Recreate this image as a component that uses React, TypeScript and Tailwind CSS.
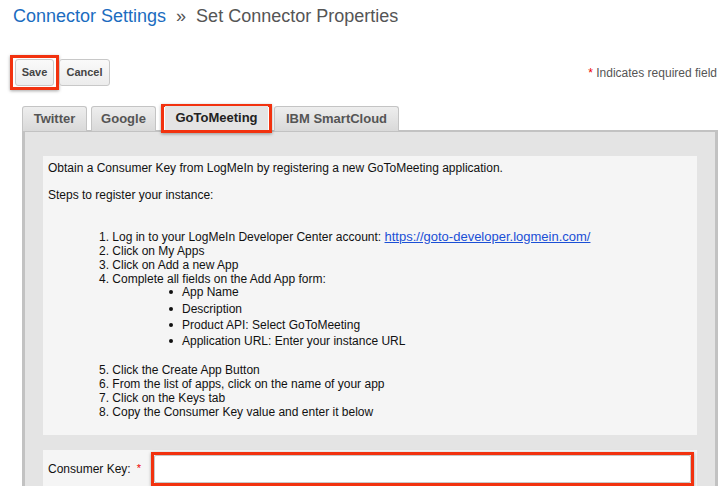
import React from "react";

const tabBase =
  "h-[25px] flex items-center justify-center border border-[#c4c4c4] border-b-0 rounded-t-[3px] bg-gradient-to-b from-[#eeeeee] to-[#d9d9d9] text-[13px] font-bold text-[#555]";

export default function App() {
  return (
    <div className="w-[721px] h-[486px] overflow-hidden bg-white font-['Liberation_Sans',Arial,sans-serif] text-[#222]">
      <h1 className="pl-[13px] pt-[5px] h-[27px] text-[18px] leading-[22px] font-normal">
        <span className="text-[#1b6cbf]">Connector Settings</span>
        <span className="text-[#555]">&nbsp;&nbsp;»&nbsp;&nbsp;Set Connector Properties</span>
      </h1>

      <div className="mt-[28px] flex items-center justify-between pl-[10px] pr-[4px]">
        <div className="flex items-center">
          <div className="w-[49px] h-[35px] border-[3px] border-[#f2320f] shadow-[0_1px_3px_rgba(0,0,0,0.35)] flex items-center pl-[2px]">
            <button className="w-[39px] h-[27px] border border-[#c8c8c8] rounded-[3px] bg-gradient-to-b from-[#fafafa] to-[#ececec] text-[11px] font-bold text-[#444]">
              Save
            </button>
          </div>
          <button className="w-[51px] h-[27px] border border-[#c8c8c8] rounded-[3px] bg-gradient-to-b from-[#fafafa] to-[#ececec] text-[11px] font-bold text-[#444]">
            Cancel
          </button>
        </div>
        <div className="text-[12px] text-[#555]">
          <span className="text-[#e00]">*</span> Indicates required field
        </div>
      </div>

      <div className="mt-[15px] pl-[22px] flex items-end h-[26px] relative z-10">
        <div className={tabBase + " w-[65px]"}>Twitter</div>
        <div className={tabBase + " w-[65px] ml-[4px]"}>Google</div>
        <div className="ml-[5px] w-[111px] h-[29px] border-[3px] border-[#f2320f] shadow-[0_1px_3px_rgba(0,0,0,0.35)] flex items-end pl-[1px] mb-[-2px]">
          <div className="w-[103px] h-[24px] flex items-center justify-center bg-[#e4e4e4] text-[13px] font-bold text-[#222]">
            GoToMeeting
          </div>
        </div>
        <div className={tabBase + " w-[125px] ml-[2px]"}>IBM SmartCloud</div>
      </div>

      <div className="ml-[22px] mr-[3px] mt-[-1px] border-t-2 border-l-[3px] border-r-[3px] border-[#c2c2c2] bg-[#e4e4e4] h-[400px] px-[18px] pt-[24px]">
        <div className="bg-[#f5f5f5] pl-[5px] pt-[5px] pb-[16px] text-[12px] leading-[14px] text-[#111]">
          <p>Obtain a Consumer Key from LogMeIn by registering a new GoToMeeting application.</p>
          <p className="mt-[13px]">Steps to register your instance:</p>
          <div className="mt-[28px] pl-[51px]">
            <div>
              1. Log in to your LogMeIn Developer Center account:{" "}
              <a className="text-[#1a4fd6] underline text-[13px]">https://goto-developer.logmein.com/</a>
            </div>
            <div>2. Click on My Apps</div>
            <div>3. Click on Add a new App</div>
            <div>4. Complete all fields on the Add App form:</div>
            <ul className="pl-[70px] mb-[13px] -mt-[2px]">
              {[
                "App Name",
                "Description",
                "Product API: Select GoToMeeting",
                "Application URL: Enter your instance URL",
              ].map((t) => (
                <li key={t} className="flex items-center h-[16.4px]">
                  <span className="w-[4px] h-[4px] rounded-full bg-[#111] mr-[9px]" />
                  {t}
                </li>
              ))}
            </ul>
            <div className="mt-[2px]">5. Click the Create App Button</div>
            <div>6. From the list of apps, click on the name of your app</div>
            <div>7. Click on the Keys tab</div>
            <div>8. Copy the Consumer Key value and enter it below</div>
          </div>
        </div>

        <div className="mt-[15px] bg-[#f5f5f5] pl-[5px] pt-[2px] h-[60px] flex items-start">
          <div className="h-[34px] flex items-center text-[12px] text-[#111] w-[103px]">
            Consumer Key:
            <span className="ml-[6px] text-[#e00] text-[11px]">*</span>
          </div>
          <div className="w-[543px] h-[34px] border-[3px] border-[#f2320f] shadow-[0_1px_3px_rgba(0,0,0,0.35)]">
            <input className="w-full h-full bg-white border border-[#c8c8c8] rounded-[2px] outline-none" />
          </div>
        </div>
      </div>
    </div>
  );
}
